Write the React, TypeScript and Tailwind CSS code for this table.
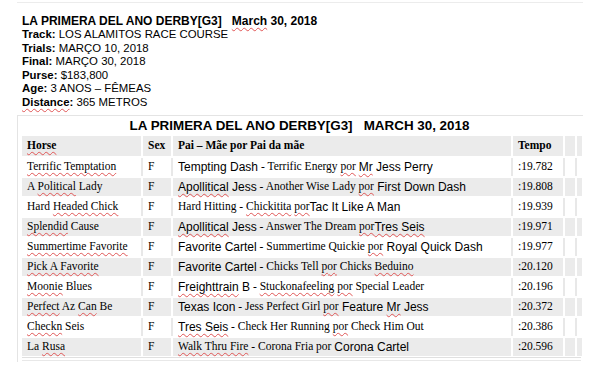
import type { ReactNode } from 'react';

type Seg = { t: string; sans?: boolean; err?: boolean };

const squiggle = 'underline decoration-wavy decoration-[#e05555] decoration-[1px] underline-offset-[2px]';

const races: { horse: Seg[]; pedigree: Seg[]; time: string }[] = [
  {
    horse: [{ t: 'Terrific Temptation', err: true }],
    pedigree: [
      { t: 'Tempting Dash', sans: true },
      { t: ' - Terrific Energy ' },
      { t: 'por', err: true },
      { t: ' ' },
      { t: 'Mr', sans: true, err: true },
      { t: ' Jess Perry', sans: true },
    ],
    time: ':19.782',
  },
  {
    horse: [{ t: 'A ' }, { t: 'Political', err: true }, { t: ' Lady' }],
    pedigree: [
      { t: 'Apollitical', sans: true, err: true },
      { t: ' Jess', sans: true },
      { t: ' - Another Wise Lady ' },
      { t: 'por', err: true },
      { t: ' First Down Dash', sans: true },
    ],
    time: ':19.808',
  },
  {
    horse: [{ t: 'Hard ' }, { t: 'Headed Chick', err: true }],
    pedigree: [
      { t: 'Hard Hitting - ' },
      { t: 'Chickitita', err: true },
      { t: ' ' },
      { t: 'por', err: true },
      { t: 'Tac It Like A Man', sans: true },
    ],
    time: ':19.939',
  },
  {
    horse: [{ t: 'Splendid', err: true }, { t: ' Cause' }],
    pedigree: [
      { t: 'Apollitical', sans: true, err: true },
      { t: ' Jess', sans: true },
      { t: ' - Answer The Dream ' },
      { t: 'por', err: true },
      { t: 'Tres Seis', sans: true, err: true },
    ],
    time: ':19.971',
  },
  {
    horse: [{ t: 'Summertime Favorite', err: true }],
    pedigree: [
      { t: 'Favorite Cartel', sans: true },
      { t: ' - Summertime Quickie ' },
      { t: 'por', err: true },
      { t: ' Royal Quick Dash', sans: true },
    ],
    time: ':19.977',
  },
  {
    horse: [{ t: 'Pick A Favorite', err: true }],
    pedigree: [
      { t: 'Favorite Cartel', sans: true },
      { t: ' - Chicks Tell ' },
      { t: 'por', err: true },
      { t: ' Chicks ' },
      { t: 'Beduino', err: true },
    ],
    time: ':20.120',
  },
  {
    horse: [{ t: 'Moonie', err: true }, { t: ' Blues' }],
    pedigree: [
      { t: 'Freighttrain', sans: true, err: true },
      { t: ' B', sans: true },
      { t: ' - ' },
      { t: 'Stuckonafeeling', err: true },
      { t: ' ' },
      { t: 'por', err: true },
      { t: ' Special Leader' },
    ],
    time: ':20.196',
  },
  {
    horse: [{ t: 'Perfect', err: true }, { t: ' Az ' }, { t: 'Can', err: true }, { t: ' Be' }],
    pedigree: [
      { t: 'Texas Icon', sans: true },
      { t: ' - Jess Perfect Girl ' },
      { t: 'por', err: true },
      { t: ' Feature ', sans: true },
      { t: 'Mr', sans: true, err: true },
      { t: ' Jess', sans: true },
    ],
    time: ':20.372',
  },
  {
    horse: [{ t: 'Checkn', err: true }, { t: ' Seis' }],
    pedigree: [
      { t: 'Tres Seis', sans: true, err: true },
      { t: ' - Check Her Running ' },
      { t: 'por', err: true },
      { t: ' Check Him Out' },
    ],
    time: ':20.386',
  },
  {
    horse: [{ t: 'La ' }, { t: 'Rusa', err: true }],
    pedigree: [
      { t: 'Walk Thru Fire', err: true },
      { t: ' - Corona Fria por ' },
      { t: 'Corona Cartel', sans: true },
    ],
    time: ':20.596',
  },
];

const Segs = ({ segs }: { segs: Seg[] }) => (
  <>
    {segs.map((s, i) => (
      <span
        key={i}
        className={`${s.sans ? "font-['Liberation_Sans',Arial,sans-serif] text-[12px]" : ''} ${s.err ? squiggle : ''} whitespace-pre`}
      >
        {s.t}
      </span>
    ))}
  </>
);

const Label = ({ label, children, err }: { label: string; children: ReactNode; err?: boolean }) => (
  <div className="leading-[13.5px]">
    <span className={`font-bold ${err ? squiggle : ''}`}>{label}</span>
    <span className="font-bold">:</span> {children}
  </div>
);

const widths = ['w-[119px]', 'w-[28px]', 'w-[338px]', 'w-[50px]', 'w-[10px]', 'w-[6px]'];

const Row = ({ gray, tall, cells }: { gray: boolean; tall?: boolean; cells: ReactNode[] }) => (
  <div className={`flex gap-[2px] ${tall ? 'h-[20px]' : 'h-[18px]'} ${gray ? 'bg-white' : 'bg-[#e8e8e8]'}`}>
    {cells.map((c, i) => (
      <div
        key={i}
        className={`${widths[i]} ${i === 5 ? 'flex-1' : 'shrink-0'} flex items-center pl-[5px] whitespace-nowrap ${
          gray ? 'bg-[#ebebeb]' : 'bg-white'
        }`}
      >
        {c}
      </div>
    ))}
  </div>
);

export default function App() {
  return (
    <div className="w-[597px] h-[380px] bg-white text-black overflow-hidden font-['Liberation_Sans',Arial,sans-serif]">
      <div className="ml-[17px] mr-[14px] mt-[2px] h-px bg-[#ececec]" />

      {/* Race info */}
      <div className="pl-[22px] pt-[11px] text-[11.4px]">
        <div className="font-bold text-[12px] leading-[14px] whitespace-pre">
          LA PRIMERA DEL ANO DERBY[G3]{'   '}
          <span className={squiggle}>March</span> 30, 2018
        </div>
        <Label label="Track">LOS ALAMITOS RACE COURSE</Label>
        <Label label="Trials">MARÇO 10, 2018</Label>
        <Label label="Final">MARÇO 30, 2018</Label>
        <Label label="Purse">$183,800</Label>
        <Label label="Age">3 ANOS – FÊMEAS</Label>
        <Label label="Distance" err>
          365 METROS
        </Label>
      </div>

      {/* Results table */}
      <div className="ml-[17px] w-[566px] mt-[6px] border-t border-l border-[#e4e4e4] pl-[4px] pr-[2px] pb-[1px]">
        <div className="h-[20px] flex items-center justify-center font-bold text-[13.4px] whitespace-pre pr-[4px] pt-[1px]">
          LA PRIMERA DEL ANO DERBY[G3]{'   '}MARCH 30, 2018
        </div>
        <div className="flex flex-col gap-[2px] font-['Liberation_Serif','Times_New_Roman',serif] text-[11.5px] bg-white">
          <Row
            gray
            tall
            cells={[
              <span className={`font-bold ${squiggle}`}>Horse</span>,
              <span className="font-bold">Sex</span>,
              <span className="font-bold">Pai – Mãe por Pai da mãe</span>,
              <span className="font-bold">Tempo</span>,
              null,
              null,
            ]}
          />
          {races.map((r, i) => (
            <Row
              key={i}
              gray={i % 2 === 1}
              cells={[<Segs segs={r.horse} />, 'F', <Segs segs={r.pedigree} />, r.time, null, null]}
            />
          ))}
        </div>
        <div className="mt-[1px] h-px bg-[#e0e0e0]" />
        <div className="mt-[2px] h-px bg-[#e8e8e8]" />
      </div>
    </div>
  );
}
